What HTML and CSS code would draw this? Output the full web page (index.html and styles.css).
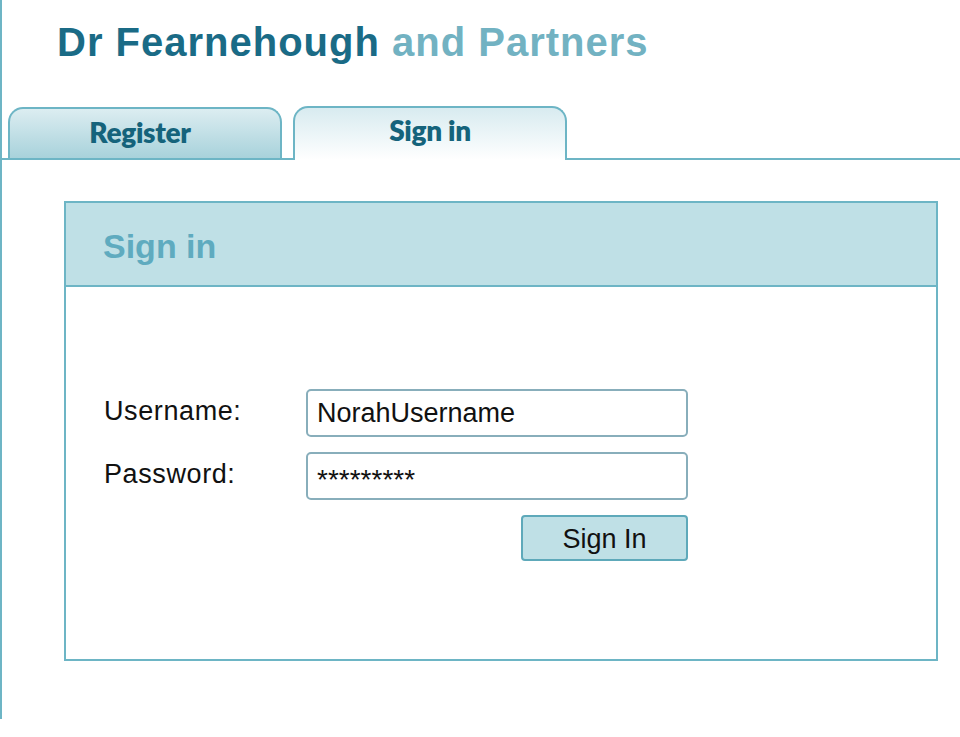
FILE: index.html
```html
<!DOCTYPE html>
<html>
<head>
<meta charset="utf-8">
<link rel="stylesheet" href="styles.css">
</head>
<body>
<div class="frame">
  <h1 class="title"><span class="dark">Dr Fearnehough</span> <span class="light">and Partners</span></h1>
  <div class="tabs">
    <div class="tab tab-register">Register</div>
    <div class="tab tab-active">Sign in</div>
  </div>
  <div class="panel">
    <div class="panel-head">Sign in</div>
    <div class="panel-body">
      <div class="form">
        <label class="label">Username:</label>
        <div class="input">NorahUsername</div>
        <label class="label">Password:</label>
        <div class="input pw">*********</div>
        <div></div>
        <div class="btn-row"><button class="btn">Sign In</button></div>
      </div>
    </div>
  </div>
</div>
</body>
</html>
```
FILE: styles.css
```css
html, body { margin: 0; padding: 0; background: #fff; }
body { font-family: "Liberation Sans", Arial, sans-serif; width: 960px; height: 737px; overflow: hidden; }
.frame { border-left: 2px solid #6db5c5; height: 719px; box-sizing: border-box; }
.title { margin: 0; padding: 17px 0 0 55px; height: 89px; box-sizing: border-box; font-size: 40px; font-weight: bold; letter-spacing: 1px; line-height: 50px; }
.dark { color: #1a6b86; }
.light { color: #72b2c2; }
.tabs { display: flex; align-items: flex-end; gap: 11px; padding-left: 6px; border-bottom: 2px solid #6db5c5; height: 52px; margin-top: 17px; }
.tab { width: 274px; height: 52px; box-sizing: border-box; border: 2px solid #6db5c5; border-bottom: none; border-radius: 15px 15px 0 0; font-family: Lato, "Open Sans", sans-serif; font-weight: 800; font-size: 28px; color: #15637b; text-align: center; line-height: 46px; letter-spacing: -0.3px; }
.tab-register { background: linear-gradient(#dcedf1, #a8d2db); height: 51px; padding-right: 10px; }
.tab-active { background: linear-gradient(#d8ebf0, #ffffff); height: 54px; margin-bottom: -2px; position: relative; line-height: 44px; }
.panel { margin: 41px 0 0 62px; width: 874px; height: 460px; box-sizing: border-box; border: 2px solid #6db5c5; }
.panel-head { height: 84px; background: #bfe0e6; border-bottom: 2px solid #6db5c5; box-sizing: border-box; padding-left: 37px; font-size: 34px; font-weight: bold; color: #5fabbf; line-height: 86px; }
.panel-body { padding: 102px 0 0 38px; }
.form { display: grid; grid-template-columns: 202px 382px; row-gap: 15px; align-items: center; }
.label { font-size: 27px; letter-spacing: 0.6px; color: #111; line-height: 48px; margin-top: -4px; }
.input { height: 48px; box-sizing: border-box; border: 2px solid #88aebb; border-radius: 5px; padding-left: 9px; font-size: 27px; line-height: 44px; color: #111; background: #fff; }
.pw { font-size: 28px; line-height: 52px; }
.btn-row { display: flex; justify-content: flex-end; }
.btn { width: 167px; height: 46px; box-sizing: border-box; border: 2px solid #5ea9ba; border-radius: 4px; background: #bfe0e6; font-family: "Liberation Sans", Arial, sans-serif; font-size: 27px; color: #111; padding: 0; line-height: 44px; }
```
